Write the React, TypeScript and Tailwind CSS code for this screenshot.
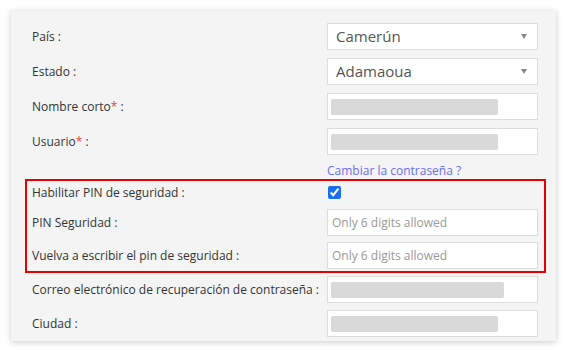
const Bar = ({ w }: { w: string }) => (
  <div className={`h-[16px] rounded-[2px] bg-[#d9d9d9] ${w}`}></div>
);

const Field = ({ children }: { children: React.ReactNode }) => (
  <div className="w-[211px] h-[27px] bg-white border border-[#dcdcdc] flex items-center px-[3px]">
    {children}
  </div>
);

const Select = ({ value }: { value: string }) => (
  <div className="w-[211px] h-[27px] bg-white border border-[#dcdcdc] flex items-center pl-[8px] pr-[10px]">
    <span className="text-[15px] text-[#555]">{value}</span>
    <div className="flex-1"></div>
    <div className="w-0 h-0 border-l-[3px] border-r-[3px] border-t-[5px] border-l-transparent border-r-transparent border-t-[#888]"></div>
  </div>
);

const Row = ({
  label,
  req,
  children,
  className = "",
}: {
  label: string;
  req?: boolean;
  children: React.ReactNode;
  className?: string;
}) => (
  <div className={`flex items-center ${className}`}>
    <div className="w-[295px] whitespace-nowrap text-[12px] text-[#333]">
      {label}
      {req && <span className="text-[#e8453c]">*</span>} :
    </div>
    {children}
  </div>
);

const App: React.FC = () => {
  return (
    <div className="w-[567px] h-[350px] bg-white pt-[11px] pl-[11px] font-['Open_Sans',sans-serif]">
      <div className="w-[545px] h-[330px] bg-[#f4f4f4] shadow-[0_1px_6px_rgba(0,0,0,0.22)] pl-[21px] pr-[18px] pt-[12px]">
        <div className="flex flex-col gap-[8px]">
          <Row label="País">
            <Select value="Camerún" />
          </Row>
          <Row label="Estado">
            <Select value="Adamaoua" />
          </Row>
          <Row label="Nombre corto" req>
            <Field>
              <Bar w="w-[167px]" />
            </Field>
          </Row>
          <Row label="Usuario" req>
            <Field>
              <Bar w="w-[167px]" />
            </Field>
          </Row>
        </div>
        <div className="h-[17px] mt-[7px] pl-[295px] text-[12px] leading-[17px] text-[#6b6ef0]">
          Cambiar la contraseña ?
        </div>
        <div className="-ml-[7px] -mr-[8px] pl-[5px] pr-[6px] pb-[2px] border-2 border-[#e60000] flex flex-col">
          <Row label="Habilitar PIN de seguridad" className="h-[23px]">
            <input
              type="checkbox"
              defaultChecked
              className="w-[13px] h-[13px] m-0 ml-[1px] accent-[#1a6ef0]"
            />
          </Row>
          <Row label="PIN Seguridad" className="mt-[5px]">
            <Field>
              <span className="text-[12px] text-[#999] pl-[1px]">Only 6 digits allowed</span>
            </Field>
          </Row>
          <Row label="Vuelva a escribir el pin de seguridad" className="mt-[6px]">
            <Field>
              <span className="text-[12px] text-[#999] pl-[1px]">Only 6 digits allowed</span>
            </Field>
          </Row>
        </div>
        <div className="flex flex-col gap-[7px] mt-[3px]">
          <Row label="Correo electrónico de recuperación de contraseña">
            <Field>
              <Bar w="w-[173px]" />
            </Field>
          </Row>
          <Row label="Ciudad">
            <Field>
              <Bar w="w-[167px]" />
            </Field>
          </Row>
        </div>
      </div>
    </div>
  );
};

export default App;
